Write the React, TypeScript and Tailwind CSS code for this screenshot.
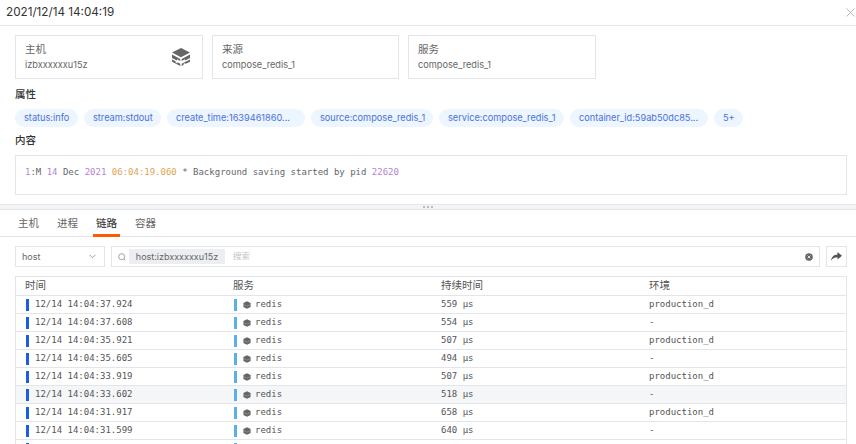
import React from "react";

const sans = "font-['Inter','Noto_Sans_CJK_SC',sans-serif]";

function Cube({ size = 20, color = "#666" }: { size?: number; color?: string }) {
  return (
    <svg width={size} height={size} viewBox="0 0 20 20" fill={color}>
      <path d="M10 1 L19 5.6 L10 10.2 L1 5.6 Z" />
      <path d="M1 7.6 L9.3 11.9 V14 L6 12.3 V13.6 L1 11 Z" />
      <path d="M19 7.6 L10.7 11.9 V14 L14 12.3 V13.6 L19 11 Z" />
      <path d="M1 12.4 L4.6 14.3 V15.5 L6.4 16.4 V15.2 L9.3 16.7 V19 L1 14.8 Z" />
      <path d="M19 12.4 L10.7 16.7 V19 L12.6 18 V16.8 L14.4 15.9 V17.1 L19 14.8 Z" />
    </svg>
  );
}

function SmallCube() {
  return (
    <svg width="8" height="8" viewBox="0 0 8 8">
      <path d="M4 0.2 L7.6 2 V6 L4 7.8 L0.4 6 V2 Z" fill="#666" />
      <path d="M0.6 3.6 L4 5.2 L7.4 3.6" stroke="#bbb" strokeWidth="0.4" fill="none" />
    </svg>
  );
}

function InfoCard({ label, value, icon }: { label: string; value: string; icon?: boolean }) {
  return (
    <div className="flex h-[44px] items-center justify-between border border-[#e3e5ea] pl-[9px] pr-[11px]">
      <div className="flex flex-col">
        <span className="text-[10.5px] leading-[15px] text-[#666]">{label}</span>
        <span className="text-[9.2px] leading-[15px] text-[#666]">{value}</span>
      </div>
      {icon && <Cube />}
    </div>
  );
}

const tags: [string, string][] = [
  ["status:info", "w-[63px]"],
  ["stream:stdout", "w-[77px]"],
  ["create_time:1639461860...", "w-[138px]"],
  ["source:compose_redis_1", "w-[122px]"],
  ["service:compose_redis_1", "w-[125px]"],
  ["container_id:59ab50dc85...", "w-[138px]"],
  ["5+", "w-[29px]"],
];

const rows: [string, string, string, boolean?][] = [
  ["12/14 14:04:37.924", "559 µs", "production_d"],
  ["12/14 14:04:37.608", "554 µs", "-"],
  ["12/14 14:04:35.921", "507 µs", "production_d"],
  ["12/14 14:04:35.605", "494 µs", "-"],
  ["12/14 14:04:33.919", "507 µs", "production_d"],
  ["12/14 14:04:33.602", "518 µs", "-", true],
  ["12/14 14:04:31.917", "658 µs", "production_d"],
  ["12/14 14:04:31.599", "640 µs", "-"],
  ["", "", ""],
];

function Row({ time, dur, env, hover }: { time: string; dur: string; env: string; hover?: boolean }) {
  return (
    <div
      className={`grid h-[18px] grid-cols-[208px_208px_208px_1fr] items-center border-b border-[#e3e5ea] font-['DejaVu_Sans_Mono',monospace] text-[9px] text-[#555] ${
        hover ? "bg-[#f5f6f8]" : "bg-white"
      }`}
    >
      <div className="flex items-center pl-[10px]">
        <span className="h-[12px] w-[3px] bg-[#1a5fe0]" />
        <span className="ml-[6px]">{time}</span>
      </div>
      <div className="flex items-center pl-[10px]">
        <span className="h-[12px] w-[3px] bg-[#5ab0e8]" />
        {time && (
          <>
            <span className="ml-[6px] flex">
              <SmallCube />
            </span>
            <span className="ml-[4px]">redis</span>
          </>
        )}
      </div>
      <div className="pl-[9px]">{dur}</div>
      <div className="pl-[9px]">{env}</div>
    </div>
  );
}

export default function App() {
  return (
    <div className={`h-[444px] w-[856px] overflow-hidden bg-white ${sans}`}>
      <header className="flex h-[26px] items-center justify-between border-b border-[#e3e5ea] pl-[6px] pr-[1px]">
        <span className="text-[11.7px] text-[#333]">2021/12/14 14:04:19</span>
        <svg width="9" height="9" viewBox="0 0 9 9" stroke="#aaa" strokeWidth="0.8" fill="none">
          <path d="M0.5 0.5 L8.5 8.5 M8.5 0.5 L0.5 8.5" />
        </svg>
      </header>

      <section className="px-[15px] pt-[9px]">
        <div className="grid w-[581px] grid-cols-[188px_187px_188px] gap-[9px]">
          <InfoCard label="主机" value="izbxxxxxxu15z" icon />
          <InfoCard label="来源" value="compose_redis_1" />
          <InfoCard label="服务" value="compose_redis_1" />
        </div>

        <h3 className="mt-[9px] text-[10.5px] font-medium leading-[14px] text-[#333]">属性</h3>
        <div className="mt-[7px] flex h-[18px] gap-[6px]">
          {tags.map(([t, w]) => (
            <span
              key={t}
              className={`flex h-[18px] items-center whitespace-nowrap rounded-full bg-[#edf5fe] pl-[9px] text-[9.2px] text-[#4a72dc] ${w}`}
            >
              {t}
            </span>
          ))}
        </div>

        <h3 className="mt-[7px] text-[10.5px] font-medium leading-[14px] text-[#333]">内容</h3>
        <div className="mt-[7px] flex h-[40px] w-[832px] items-start border border-[#e3e5ea] pl-[9px] pt-[10px] font-['DejaVu_Sans_Mono',monospace] text-[9px] leading-[12px] text-[#666]">
          <pre className="font-['DejaVu_Sans_Mono',monospace]">
            <span className="text-[#b583d6]">1</span>:M <span className="text-[#b583d6]">14</span> Dec{" "}
            <span className="text-[#b583d6]">2021</span>{" "}
            <span className="text-[#e0a455]">06:04:19.060</span> * Background saving started by pid{" "}
            <span className="text-[#b583d6]">22620</span>
          </pre>
        </div>
      </section>

      <div className="mt-[9px] flex h-[6px] items-center justify-center gap-[2px] border-y border-[#e3e5ea] bg-[#f3f4f6]">
        <span className="h-[2px] w-[2px] bg-[#bbb]" />
        <span className="h-[2px] w-[2px] bg-[#bbb]" />
        <span className="h-[2px] w-[2px] bg-[#bbb]" />
      </div>

      <nav className="flex h-[27px] items-stretch gap-[12px] border-b border-[#e3e5ea] pl-[15px] pt-[1px] text-[10.5px] text-[#666]">
        <span className="flex w-[27px] items-center justify-center">主机</span>
        <span className="flex w-[27px] items-center justify-center">进程</span>
        <span className="-mb-px flex w-[27px] items-center justify-center border-b-[3px] border-[#ff5a00] pt-[2px] font-medium text-[#444]">
          链路
        </span>
        <span className="flex w-[27px] items-center justify-center">容器</span>
      </nav>

      <div className="mt-[9px] flex h-[21px] gap-[6px] px-[15px] pr-[9px]">
        <div className="flex w-[90px] items-center justify-between border border-[#e3e5ea] pl-[6px] pr-[8px] text-[9px] text-[#666]">
          host
          <svg width="7" height="5" viewBox="0 0 7 5" fill="none" stroke="#888" strokeWidth="0.8">
            <path d="M0.5 0.8 L3.5 3.8 L6.5 0.8" />
          </svg>
        </div>
        <div className="flex w-[709px] items-center border border-[#e3e5ea] pl-[6px] pr-[6px]">
          <svg width="8" height="8" viewBox="0 0 8 8" fill="none" stroke="#888" strokeWidth="0.8">
            <circle cx="3.7" cy="3.7" r="3" />
            <path d="M6 6 L7.4 7.4" />
          </svg>
          <span className="ml-[3px] flex h-[15px] w-[96px] items-center justify-center rounded-[1px] bg-[#eceef1] text-[9px] text-[#666]">
            host:izbxxxxxxu15z
          </span>
          <span className="ml-[8px] text-[8.5px] text-[#c4c4c4]">搜索</span>
          <svg className="ml-auto" width="8" height="8" viewBox="0 0 8 8">
            <circle cx="4" cy="4" r="3.8" fill="#666" />
            <path d="M2.6 2.6 L5.4 5.4 M5.4 2.6 L2.6 5.4" stroke="#fff" strokeWidth="0.8" />
          </svg>
        </div>
        <div className="flex w-[21px] items-center justify-center border border-[#e3e5ea]">
          <svg width="11" height="9" viewBox="0 0 11 9" fill="#555">
            <path d="M6.5 0 L11 3.8 L6.5 7.6 V5.2 C3.8 5.2 1.8 6 0 8.8 C0.6 5 2.8 2.6 6.5 2.4 Z" />
          </svg>
        </div>
      </div>

      <div className="mx-[15px] mt-[9px] w-[832px] border-x border-t border-[#e3e5ea]">
        <div className="grid h-[19px] grid-cols-[208px_208px_208px_1fr] items-center border-b border-[#e3e5ea] text-[10.5px] text-[#555]">
          <div className="pl-[9px]">时间</div>
          <div className="pl-[9px]">服务</div>
          <div className="pl-[9px]">持续时间</div>
          <div className="pl-[9px]">环境</div>
        </div>
        {rows.map(([t, d, e, h], i) => (
          <Row key={i} time={t} dur={d} env={e} hover={h} />
        ))}
      </div>
    </div>
  );
}
